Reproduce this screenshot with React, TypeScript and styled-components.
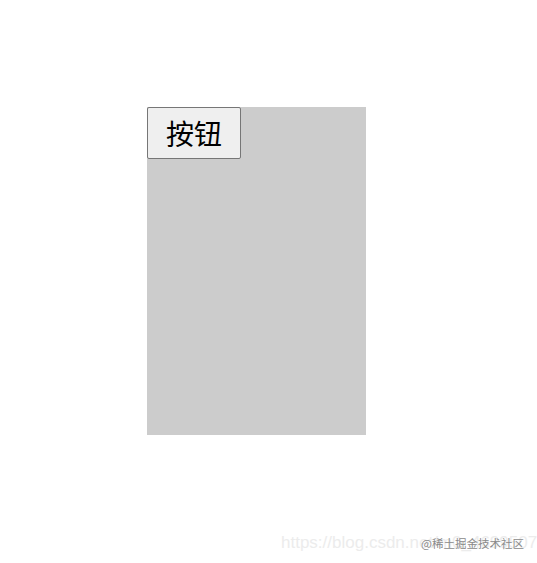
import styled, { createGlobalStyle } from "styled-components";

const GlobalStyle = createGlobalStyle`
  html, body {
    margin: 0;
    padding: 0;
    background: #ffffff;
    font-family: "Liberation Sans", "Noto Sans CJK SC", sans-serif;
  }
`;

const Page = styled.div`
  position: relative;
  width: 537px;
  height: 563px;
  padding: 107px 0 0 147px;
  box-sizing: border-box;
  overflow: hidden;
`;

const Box = styled.div`
  width: 219px;
  height: 328px;
  background: #cccccc;
`;

const Button = styled.button`
  display: block;
  width: 94px;
  height: 52px;
  padding: 0;
  font-family: "Noto Sans CJK SC", sans-serif;
  font-size: 28px;
  color: #000;
  background: #efefef;
  border: 1px solid #767676;
  border-radius: 2px;
`;

const Watermark = styled.div`
  position: absolute;
  left: 281px;
  top: 533px;
  font-size: 17px;
  color: #ececec;
  white-space: nowrap;
`;

const Credit = styled.span`
  position: absolute;
  left: 421px;
  top: 535px;
  font-family: "Noto Sans CJK SC", sans-serif;
  font-size: 11.5px;
  color: #8a8a8a;
  white-space: nowrap;
`;

export default function App() {
  return (
    <>
      <GlobalStyle />
      <Page>
        <Box>
          <Button>按钮</Button>
        </Box>
        <Watermark>https://blog.csdn.net/m0_4699507</Watermark>
        <Credit>@稀土掘金技术社区</Credit>
      </Page>
    </>
  );
}
